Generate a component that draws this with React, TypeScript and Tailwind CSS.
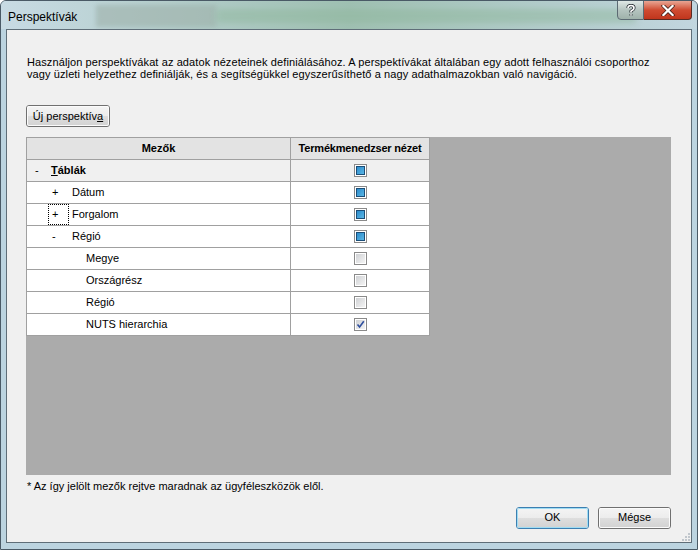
import React from 'react';

type Check = 'mixed' | 'off' | 'on';

interface Row {
  level: 0 | 1 | 2;
  sign?: '+' | '-';
  label: string;
  check: Check;
  focus?: boolean;
}

const rows: Row[] = [
  { level: 0, sign: '-', label: 'Táblák', check: 'mixed' },
  { level: 1, sign: '+', label: 'Dátum', check: 'mixed' },
  { level: 1, sign: '+', label: 'Forgalom', check: 'mixed', focus: true },
  { level: 1, sign: '-', label: 'Régió', check: 'mixed' },
  { level: 2, label: 'Megye', check: 'off' },
  { level: 2, label: 'Országrész', check: 'off' },
  { level: 2, label: 'Régió', check: 'off' },
  { level: 2, label: 'NUTS hierarchia', check: 'on' },
];

function CheckBox({ state }: { state: Check }) {
  return (
    <div className="w-[13px] h-[13px] border border-[#8a8a8a] bg-white p-px">
      {state === 'mixed' ? (
        <div className="w-full h-full border border-[#1b4e78] bg-gradient-to-br from-[#2a8ccc] to-[#5ab6e4]" />
      ) : (
        <div className="w-full h-full bg-gradient-to-br from-[#cfd1d4] to-[#f4f4f4] relative">
          {state === 'on' && (
            <svg viewBox="0 0 9 9" className="absolute inset-0 w-[9px] h-[9px]">
              <path d="M1.5 4.5 L3.6 7 L7.8 1.2" stroke="#2f4f9e" strokeWidth="1.6" fill="none" />
            </svg>
          )}
        </div>
      )}
    </div>
  );
}

function WinButton({ children, focused, className }: { children: React.ReactNode; focused?: boolean; className?: string }) {
  return (
    <div
      className={
        'h-[22px] rounded-[3px] border flex items-center justify-center text-[11px] text-black relative overflow-hidden ' +
        (focused ? 'border-[#3c7fb1] ' : 'border-[#707070] ') +
        (className ?? '')
      }
    >
      <div className="absolute inset-x-0 top-0 h-1/2 bg-gradient-to-b from-[#f4f4f4] to-[#ececec]" />
      <div className="absolute inset-x-0 bottom-0 h-1/2 bg-gradient-to-b from-[#dedede] to-[#d2d2d2]" />
      <div className={'absolute inset-0 border rounded-[2px] ' + (focused ? 'border-[#9fdcf3]' : 'border-[#fbfbfb]')} />
      <span className="relative">{children}</span>
    </div>
  );
}

export default function App() {
  return (
    <div
      className="w-[698px] h-[550px] overflow-hidden bg-[#bcd4e0] rounded-t-[6px] border border-[#4a5a66] flex flex-col"
      style={{ fontFamily: '"Liberation Sans", Arial, sans-serif' }}
    >
      {/* Title bar */}
      <div className="h-[28px] shrink-0 relative bg-gradient-to-r from-[#c8dbe4] via-[#9fc0b2] to-[#c2d6df]">
        <div className="absolute left-[95px] top-[4px] w-[120px] h-[22px] bg-[#9eb1ab] opacity-60 blur-[2px]" />
        <div className="absolute left-[215px] top-[8px] w-[420px] h-[14px] bg-[#8fb79c] opacity-50 blur-[3px]" />
        <div className="absolute left-[7px] top-[7px] text-[12px] text-black">Perspektívák</div>
        <div className="absolute right-[5px] top-[-1px] flex">
          <div className="w-[27px] h-[20px] border border-[#5c6a73] rounded-bl-[4px] bg-gradient-to-b from-[#dfe8e6] via-[#b5c4c0] to-[#9fb2ab] flex items-center justify-center">
            <svg viewBox="0 0 10 13" className="w-[10px] h-[13px]">
              <path d="M2 4 Q2 1.5 5 1.5 Q8 1.5 8 4 Q8 5.6 5.8 6.6 L5 7.2 L5 8.6 M5 10.2 L5 11.6" stroke="#2b3238" strokeWidth="3.2" fill="none" />
              <path d="M2 4 Q2 1.5 5 1.5 Q8 1.5 8 4 Q8 5.6 5.8 6.6 L5 7.2 L5 8.6 M5 10.2 L5 11.6" stroke="#fff" strokeWidth="1.6" fill="none" />
            </svg>
          </div>
          <div className="w-[48px] h-[20px] border border-l-0 border-[#5a2a22] rounded-br-[4px] bg-gradient-to-b from-[#e8a593] via-[#cf4b31] to-[#c1351c] flex items-center justify-center">
            <svg viewBox="0 0 14 12" className="w-[14px] h-[11px]">
              <path d="M2 1 L12 11 M12 1 L2 11" stroke="#3a1a14" strokeWidth="4" strokeLinecap="square" />
              <path d="M2 1 L12 11 M12 1 L2 11" stroke="#fff" strokeWidth="2.4" strokeLinecap="square" />
            </svg>
          </div>
        </div>
      </div>

      {/* Client */}
      <div className="flex-1 mx-[5px] mb-[6px] border border-[#5f6e78] bg-[#f0f0f0] relative text-[11px] text-black">
        <div className="pl-[20px] pt-[26px] leading-[12px] tracking-[0.1px]">
          Használjon perspektívákat az adatok nézeteinek definiálásához. A perspektívákat általában egy adott felhasználói csoporthoz
          <br />
          vagy üzleti helyzethez definiálják, és a segítségükkel egyszerűsíthető a nagy adathalmazokban való navigáció.
        </div>

        <div className="pl-[19px] pt-[25px]">
          <WinButton className="w-[84px]">
            Új perspektív<span className="underline">a</span>
          </WinButton>
        </div>

        {/* Grid */}
        <div className="ml-[19px] mt-[10px] w-[645px] h-[338px] bg-[#ababab]">
          <div className="w-[404px] border border-[#a0a0a0] border-b-0">
            <div className="flex h-[22px] bg-[#e3e3e3] border-b border-[#a0a0a0] font-bold">
              <div className="w-[264px] border-r border-[#a0a0a0] flex items-center justify-center">Mezők</div>
              <div className="flex-1 flex items-center justify-center tracking-[-0.2px]">Termékmenedzser nézet</div>
            </div>
            {rows.map((r, i) => (
              <div
                key={i}
                className={'flex h-[22px] border-b border-[#a0a0a0] ' + (r.level === 0 ? 'bg-[#f0f0f0]' : 'bg-white')}
              >
                <div className="w-[264px] border-r border-[#a0a0a0] flex items-center relative">
                  {r.level === 0 && (
                    <>
                      <span className="absolute left-[8px]">-</span>
                      <span className="absolute left-[24px] font-bold">
                        <span className="underline">T</span>áblák
                      </span>
                    </>
                  )}
                  {r.level === 1 && (
                    <>
                      {r.focus && (
                        <div className="absolute left-[21px] top-0 w-[21px] h-[21px] border border-dotted border-black" />
                      )}
                      <span className="absolute left-[25px]">{r.sign}</span>
                      <span className="absolute left-[45px]">{r.label}</span>
                    </>
                  )}
                  {r.level === 2 && <span className="absolute left-[59px]">{r.label}</span>}
                </div>
                <div className="flex-1 flex items-center justify-center">
                  <CheckBox state={r.check} />
                </div>
              </div>
            ))}
          </div>
        </div>

        <div className="pl-[20px] pt-[3px]">* Az így jelölt mezők rejtve maradnak az ügyféleszközök elől.</div>

        <div className="flex justify-end gap-[9px] pr-[20px] pt-[12px]">
          <WinButton focused className="w-[73px]">OK</WinButton>
          <WinButton className="w-[73px]">Mégse</WinButton>
        </div>

        {/* resize grip */}
        <svg viewBox="0 0 8 8" className="absolute right-[1px] bottom-[1px] w-[8px] h-[8px]">
          {[
            [6, 0],
            [3, 3],
            [6, 3],
            [0, 6],
            [3, 6],
            [6, 6],
          ].map(([x, y], k) => (
            <rect key={k} x={x} y={y} width="2" height="2" fill="#c0c6cc" />
          ))}
        </svg>
      </div>
    </div>
  );
}
